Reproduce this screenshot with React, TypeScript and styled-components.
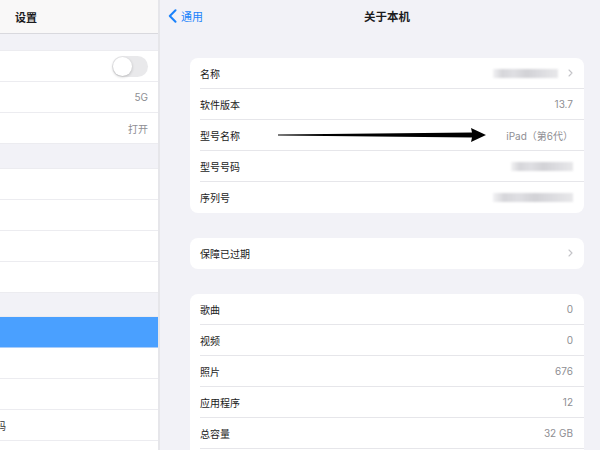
import React from "react";
import styled, { createGlobalStyle } from "styled-components";

const Global = createGlobalStyle`
  html, body { margin: 0; padding: 0; background: #f2f2f7; }
  body { font-family: "Inter", "Noto Sans CJK SC", "Noto Sans", sans-serif; }
`;

const Page = styled.div`
  width: 600px;
  height: 450px;
  overflow: hidden;
  display: flex;
  align-items: flex-start;
  background: #f2f2f7;
`;

const Sidebar = styled.div`
  width: 158px;
  height: 460px;
  flex-shrink: 0;
  overflow: hidden;
  border-right: 2px solid #e6e6ea;
  background: #f2f2f7;
  display: flex;
  flex-direction: column;
  & > * { flex-shrink: 0; }
`;

const SideHeader = styled.div`
  height: 33px;
  background: #f9f8f8;
  border-bottom: 1px solid #d9d9de;
  display: flex;
  align-items: center;
  padding-left: 15px;
  font-size: 11px;
  font-weight: 600;
  color: #1c1c1e;
`;

const SideGroup = styled.div<{ $gap: number }>`
  margin-top: ${(p) => p.$gap}px;
  background: #fff;
  border-top: 1px solid #ececf0;
`;

const SideRow = styled.div<{ $active?: boolean }>`
  height: 30px;
  border-bottom: 1px solid ${(p) => (p.$active ? "#a9cdfa" : "#ececf0")};
  background: ${(p) => (p.$active ? "#4aa0ff" : "#fff")};
  display: flex;
  align-items: center;
  justify-content: space-between;
  padding-right: 10px;
  font-size: 10px;
  color: #1c1c1e;
`;

const CroppedLabel = styled.span`
  margin-left: -14px;
  color: #333;
`;

const SideValue = styled.span`
  margin-left: auto;
  color: #8e8e93;
  font-size: 10px;
`;

const Toggle = styled.div`
  margin-left: auto;
  width: 36px;
  height: 21px;
  border-radius: 11px;
  background: #e9e9eb;
  position: relative;
  &::after {
    content: "";
    position: absolute;
    left: 1px;
    top: 1px;
    width: 19px;
    height: 19px;
    border-radius: 50%;
    background: #fff;
    box-shadow: 0 1px 3px rgba(0, 0, 0, 0.22);
  }
`;

const Main = styled.div`
  width: 454px;
  height: 460px;
  flex-shrink: 0;
  display: flex;
  flex-direction: column;
  & > * { flex-shrink: 0; }
`;

const Header = styled.div`
  height: 32px;
  padding: 0 8px;
  display: grid;
  grid-template-columns: 1fr auto 1fr;
  align-items: center;
`;

const Back = styled.div`
  display: flex;
  align-items: center;
  gap: 4px;
  color: #1a82fb;
  font-size: 11px;
`;

const Title = styled.div`
  font-size: 11.5px;
  font-weight: 600;
  color: #1c1c1e;
`;

const Content = styled.div`
  padding: 26px 30px 0;
  display: flex;
  flex-direction: column;
  gap: 25px;
  & > * { flex-shrink: 0; }
`;

const Card = styled.div`
  background: #fff;
  border-radius: 8px;
  position: relative;
`;

const Row = styled.div`
  padding-left: 10px;
  display: flex;
`;

const RowInner = styled.div<{ $last?: boolean }>`
  flex: 1;
  height: 30px;
  border-bottom: 1px solid ${(p) => (p.$last ? "transparent" : "#e6e6ea")};
  padding-right: 11px;
  display: flex;
  align-items: center;
  justify-content: space-between;
  font-size: 10px;
`;

const Label = styled.span`
  color: #1a1a1a;
`;

const Value = styled.span`
  color: #8e8e93;
  display: flex;
  align-items: center;
  gap: 10px;
`;

const Blur = styled.span<{ $w: number }>`
  display: inline-block;
  width: ${(p) => p.$w}px;
  height: 9px;
  background: linear-gradient(
    90deg,
    #f2f2f4 0%,
    #d6d6da 14%,
    #dfdfe3 32%,
    #d2d2d6 52%,
    #dcdce0 74%,
    #e8e8ea 100%
  );
  filter: blur(1.2px);
`;

const ArrowWrap = styled.svg`
  position: absolute;
  left: 88px;
  top: 70px;
  width: 210px;
  height: 16px;
  overflow: visible;
`;

const Chevron = () => (
  <svg width="5" height="8" viewBox="0 0 5 8">
    <path d="M1 1 L4 4 L1 7" fill="none" stroke="#c4c4c8" strokeWidth="1.1" strokeLinecap="round" strokeLinejoin="round" />
  </svg>
);

type Item = { label: string; value?: React.ReactNode };

const CardList = ({ items, children }: { items: Item[]; children?: React.ReactNode }) => (
  <Card>
    {items.map((it, i) => (
      <Row key={it.label + i}>
        <RowInner $last={i === items.length - 1}>
          <Label>{it.label}</Label>
          <Value>{it.value}</Value>
        </RowInner>
      </Row>
    ))}
    {children}
  </Card>
);

export default function App() {
  const about: Item[] = [
    { label: "名称", value: (<><Blur $w={65} /><Chevron /></>) },
    { label: "软件版本", value: "13.7" },
    { label: "型号名称", value: "iPad（第6代）" },
    { label: "型号号码", value: <Blur $w={62} /> },
    { label: "序列号", value: <Blur $w={80} /> },
  ];
  const stats: Item[] = [
    { label: "歌曲", value: "0" },
    { label: "视频", value: "0" },
    { label: "照片", value: "676" },
    { label: "应用程序", value: "12" },
    { label: "总容量", value: "32 GB" },
    { label: "", value: "" },
  ];
  return (
    <>
      <Global />
      <Page>
        <Sidebar>
          <SideHeader>设置</SideHeader>
          <SideGroup $gap={16}>
            <SideRow><Toggle /></SideRow>
            <SideRow><SideValue>5G</SideValue></SideRow>
            <SideRow><SideValue>打开</SideValue></SideRow>
          </SideGroup>
          <SideGroup $gap={24}>
            <SideRow />
            <SideRow />
            <SideRow />
            <SideRow />
          </SideGroup>
          <SideGroup $gap={23}>
            <SideRow $active />
            <SideRow />
            <SideRow />
            <SideRow><CroppedLabel>密码</CroppedLabel></SideRow>
            <SideRow />
          </SideGroup>
        </Sidebar>
        <Main>
          <Header>
            <Back>
              <svg width="9" height="14" viewBox="0 0 9 14">
                <path d="M7.5 1.2 L1.8 7 L7.5 12.8" fill="none" stroke="#1a82fb" strokeWidth="2" strokeLinecap="round" strokeLinejoin="round" />
              </svg>
              通用
            </Back>
            <Title>关于本机</Title>
            <span />
          </Header>
          <Content>
            <CardList items={about}>
              <ArrowWrap viewBox="0 0 210 16">
                <polygon points="0,6.4 194,4.6 193,0 208,7 193,14 194,9.4 0,7.4" fill="#000" />
              </ArrowWrap>
            </CardList>
            <CardList items={[{ label: "保障已过期", value: <Chevron /> }]} />
            <CardList items={stats} />
          </Content>
        </Main>
      </Page>
    </>
  );
}
